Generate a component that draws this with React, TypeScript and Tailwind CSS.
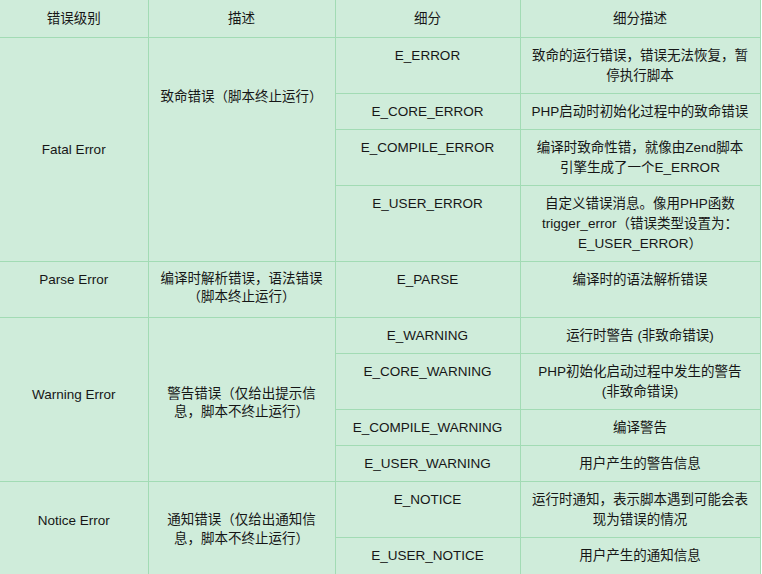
const cell = "border border-[#a2dbb4] px-1.5 pt-2 pb-[7px] text-center leading-5";

type Sub = { name: string; desc: string[]; h?: string };

type Group = {
  level: string;
  levelClass: string;
  desc: string[];
  descClass: string;
  subs: Sub[];
};

const groups: Group[] = [
  {
    level: "Fatal Error",
    levelClass: "align-middle",
    desc: ["致命错误（脚本终止运行）"],
    descClass: "align-top pt-[49px] leading-5",
    subs: [
      { name: "E_ERROR", desc: ["致命的运行错误，错误无法恢复，暂", "停执行脚本"] },
      { name: "E_CORE_ERROR", desc: ["PHP启动时初始化过程中的致命错误"] },
      { name: "E_COMPILE_ERROR", desc: ["编译时致命性错，就像由Zend脚本", "引擎生成了一个E_ERROR"] },
      { name: "E_USER_ERROR", desc: ["自定义错误消息。像用PHP函数", "trigger_error（错误类型设置为：", "E_USER_ERROR）"] },
    ],
  },
  {
    level: "Parse Error",
    levelClass: "align-top",
    desc: ["编译时解析错误，语法错误", "（脚本终止运行）"],
    descClass: "align-top leading-[18px]",
    subs: [{ name: "E_PARSE", desc: ["编译时的语法解析错误"], h: "h-[56px]" }],
  },
  {
    level: "Warning Error",
    levelClass: "align-middle pb-[17px]",
    desc: ["警告错误（仅给出提示信", "息，脚本不终止运行）"],
    descClass: "align-middle pt-[15px] leading-[18px]",
    subs: [
      { name: "E_WARNING", desc: ["运行时警告 (非致命错误)"] },
      { name: "E_CORE_WARNING", desc: ["PHP初始化启动过程中发生的警告", "(非致命错误)"] },
      { name: "E_COMPILE_WARNING", desc: ["编译警告"] },
      { name: "E_USER_WARNING", desc: ["用户产生的警告信息"] },
    ],
  },
  {
    level: "Notice Error",
    levelClass: "align-middle pb-[23px]",
    desc: ["通知错误（仅给出通知信", "息，脚本不终止运行）"],
    descClass: "align-middle pt-[9px] leading-[19px]",
    subs: [
      { name: "E_NOTICE", desc: ["运行时通知，表示脚本遇到可能会表", "现为错误的情况"] },
      { name: "E_USER_NOTICE", desc: ["用户产生的通知信息"], h: "h-[38px]" },
    ],
  },
];

function Lines({ lines }: { lines: string[] }) {
  return (
    <>
      {lines.map((l, i) => (
        <div key={i} className="whitespace-nowrap">
          {l}
        </div>
      ))}
    </>
  );
}

export default function App() {
  return (
    <div
      className="w-[762px] h-[574px] overflow-hidden bg-white text-[13.5px] text-[#161616]"
      style={{ fontFamily: '"Liberation Sans", "Noto Sans CJK SC", sans-serif' }}
    >
      <table className="w-[760px] table-fixed border-collapse bg-[#cfecda]">
        <colgroup>
          <col className="w-[148px]" />
          <col className="w-[187px]" />
          <col className="w-[185px]" />
          <col className="w-[240px]" />
        </colgroup>
        <thead>
          <tr className="h-[37px]">
            <th className={`${cell} border-t-0 border-l-0 font-normal`}>错误级别</th>
            <th className={`${cell} border-t-0 font-normal`}>描述</th>
            <th className={`${cell} border-t-0 font-normal`}>细分</th>
            <th className={`${cell} border-t-0 font-normal`}>细分描述</th>
          </tr>
        </thead>
        <tbody>
          {groups.map((g) =>
            g.subs.map((s, i) => (
              <tr key={s.name} className={`align-top ${s.h ?? ""}`}>
                {i === 0 && (
                  <>
                    <td rowSpan={g.subs.length} className={`${cell} border-l-0 ${g.levelClass}`}>
                      {g.level}
                    </td>
                    <td rowSpan={g.subs.length} className={`${cell} ${g.descClass}`}>
                      <Lines lines={g.desc} />
                    </td>
                  </>
                )}
                <td className={cell}>{s.name}</td>
                <td className={cell}>
                  <Lines lines={s.desc} />
                </td>
              </tr>
            ))
          )}
        </tbody>
      </table>
    </div>
  );
}
